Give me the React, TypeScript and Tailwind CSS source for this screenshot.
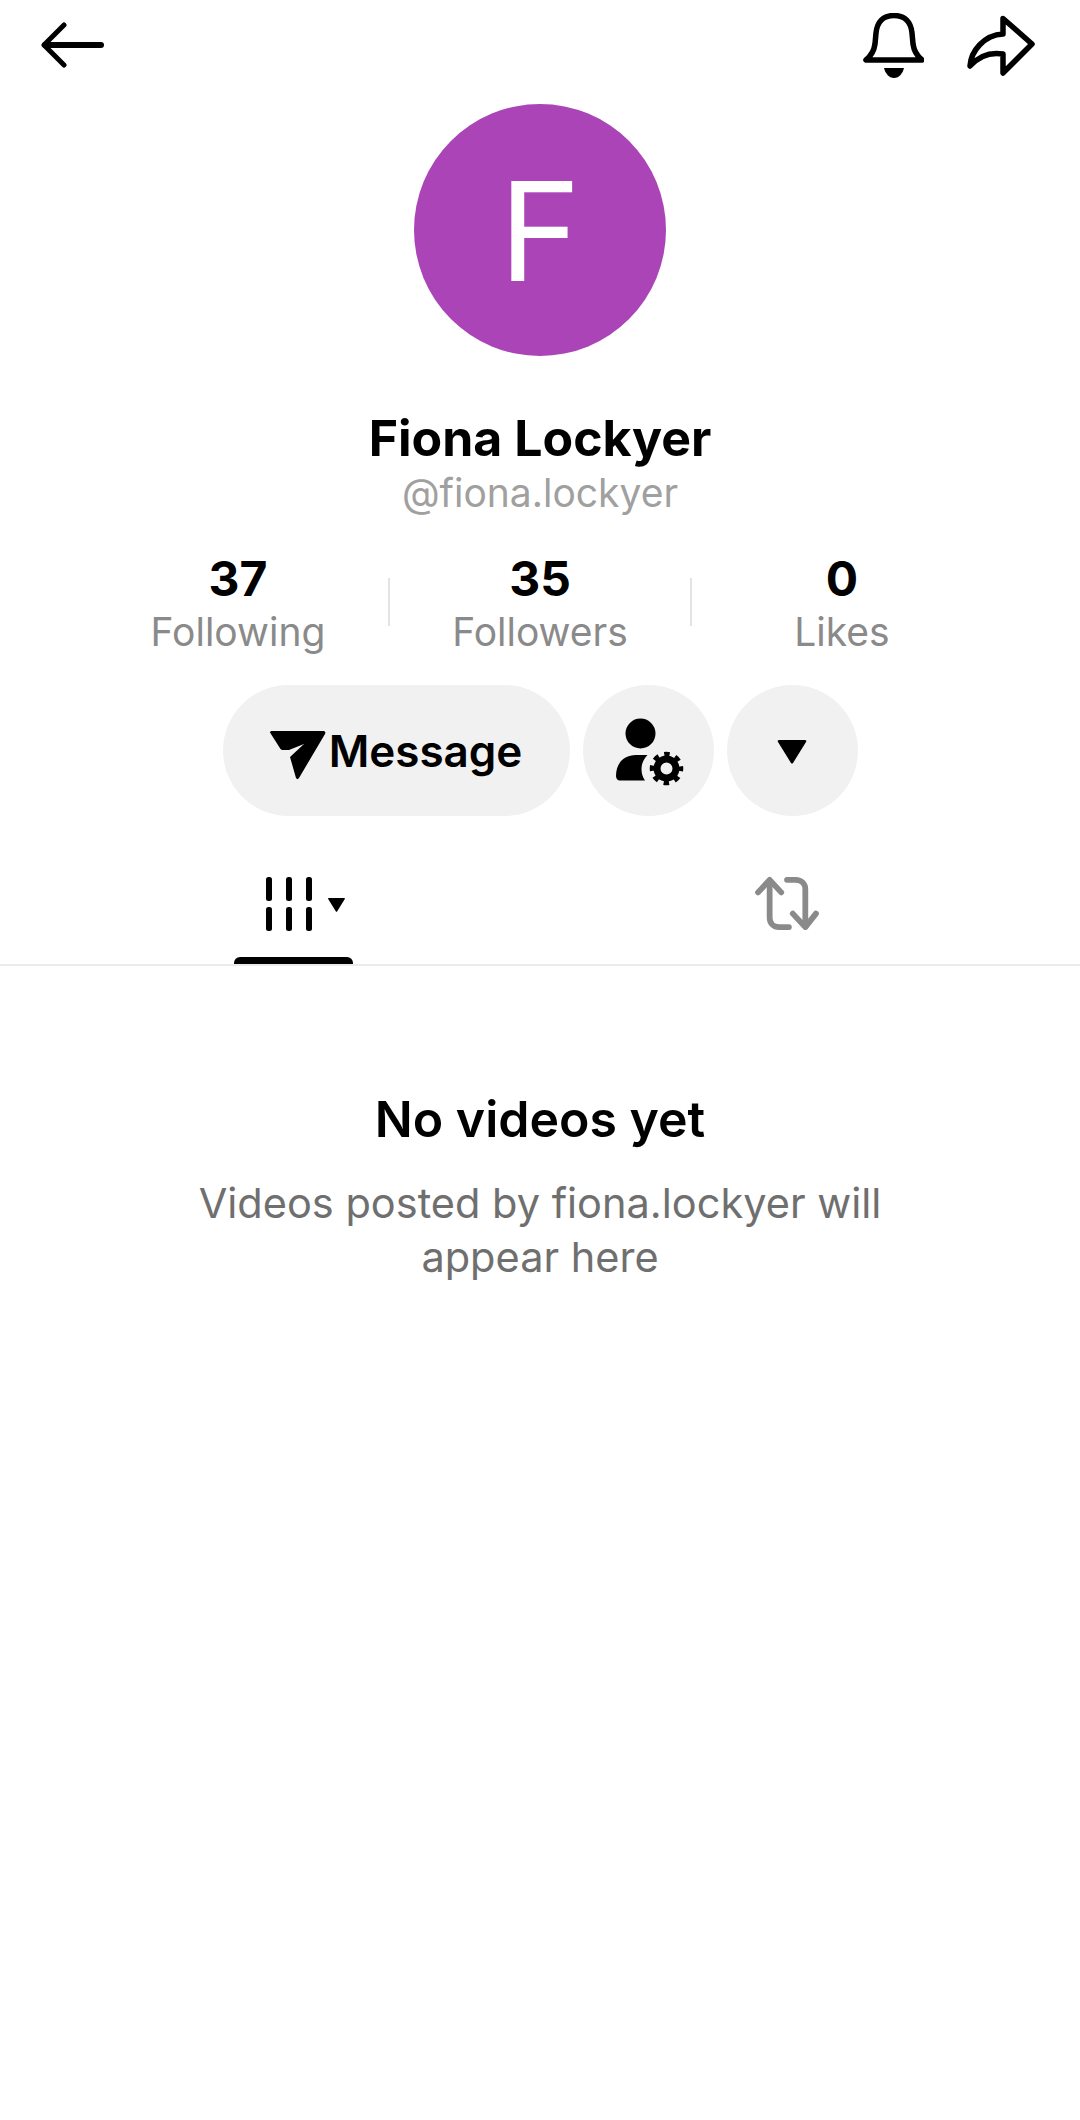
import { ReactNode } from 'react';

function BackIcon() {
  return (
    <svg width="64" height="46" viewBox="0 0 64 46" fill="none" stroke="black" strokeWidth="6" strokeLinecap="round" strokeLinejoin="round">
      <path d="M60 23H4" />
      <path d="M23 3L3 23l20 20" strokeWidth="5" />
    </svg>
  );
}

function BellIcon() {
  return (
    <svg width="62" height="66" viewBox="0 0 62 66" fill="none">
      <path d="M32 2.500C21 2.500 15 9 14 20l-1 11C12 38 9 43 4 47H60C55 43 52 38 51 31l-1-11C49 9 43 2.500 32 2.500Z" stroke="black" strokeWidth="5.500" strokeLinejoin="round" />
      <path d="M22 55h20c-1 5-5 10-10 10s-9-5-10-10Z" fill="black" />
    </svg>
  );
}

function ShareIcon() {
  return (
    <svg width="68" height="62" viewBox="0 0 68 62" fill="none">
      <path d="M36 3.500 65 29 36 58V39C24 37 12 41 3 51 4 36 17 20 36 19V3.500Z" stroke="black" strokeWidth="5.500" strokeLinejoin="round" />
    </svg>
  );
}

function SendIcon() {
  return (
    <svg width="56" height="49" viewBox="0 0 56 49" fill="black" className="mt-[9px]">
      <path d="M0 1.500C0 .5 1 0 2 0h51c2 0 3 1 2 3L29 47c-1 1.500-2 1.500-3 0L20 26l14-13-15 6H13c-1 0-2-.5-2.500-1L0 1.500Z" />
    </svg>
  );
}

function UserGearIcon() {
  return (
    <svg width="68" height="66" viewBox="0 0 68 66" fill="black" className="overflow-visible">
      <circle cx="26.500" cy="15.500" r="15" />
      <path d="M2 58C2 46 9 37 22 37h11.500c-3 3-6 8-6 14 0 4 1 8 3.500 11.500H6c-2.500 0-4-2-4-4.500Z" />
      <circle cx="52.500" cy="50.500" r="9.500" fill="none" stroke="black" strokeWidth="7" />
      <circle cx="52.500" cy="50.500" r="14.500" fill="none" stroke="black" strokeWidth="4.500" strokeDasharray="5.500 5.890" strokeDashoffset="2.750" />
    </svg>
  );
}

function GridIcon() {
  return (
    <svg width="46" height="54" viewBox="0 0 46 54" fill="black">
      <rect x="0" y="0" width="6" height="24" rx="2.500" />
      <rect x="20" y="0" width="6" height="24" rx="2.500" />
      <rect x="40" y="0" width="6" height="24" rx="2.500" />
      <rect x="0" y="30" width="6" height="24" rx="2.500" />
      <rect x="20" y="30" width="6" height="24" rx="2.500" />
      <rect x="40" y="30" width="6" height="24" rx="2.500" />
    </svg>
  );
}

function RepostIcon() {
  return (
    <svg width="64" height="54" viewBox="0 0 66 56" fill="none" stroke="#8a8a8a" strokeWidth="6" strokeLinecap="round" strokeLinejoin="round">
      <path d="M3 17 15 4l12 13" />
      <path d="M15 5v38c0 6 4 10 10 10h10" />
      <path d="M33 4h9c6 0 10 4 10 10v38" />
      <path d="M39 39l13 14 11-14" />
    </svg>
  );
}

function Caret({ className }: { className: string }) {
  return (
    <svg className={className} viewBox="0 0 30 24" fill="black">
      <path d="M1 2C0 1 1 0 2 0h26c1 0 2 1 1 2L16 23c-.5.8-1.500.8-2 0L1 2Z" />
    </svg>
  );
}

function Stat({ value, label }: { value: string; label: string }) {
  return (
    <div className="flex w-[300px] flex-col items-center">
      <span className="h-[60px] text-[48px] leading-[60px] font-bold text-black">{value}</span>
      <span className="h-[46px] text-[39px] leading-[46px] text-[#8a8a8a]">{label}</span>
    </div>
  );
}

function RoundButton({ children }: { children: ReactNode }) {
  return <button className="flex h-[131px] w-[131px] items-center justify-center rounded-full bg-[#f1f1f1]">{children}</button>;
}

export default function App() {
  return (
    <div className="flex h-[2120px] w-[1080px] flex-col items-center bg-white font-['Inter',sans-serif]">
      {/* Top bar */}
      <div className="flex h-[104px] w-full items-start justify-between pr-[45px] pl-[41px]">
        <div className="pt-[22px]">
          <BackIcon />
        </div>
        <div className="flex items-start gap-[43px] pt-[13px]">
          <BellIcon />
          <div className="pt-[2px]">
            <ShareIcon />
          </div>
        </div>
      </div>

      {/* Avatar */}
      <div className="flex h-[252px] w-[252px] items-center justify-center rounded-full bg-[#aa44b7] text-[138px] font-normal text-white">F</div>

      <h1 className="mt-[51px] h-[62px] text-[50px] leading-[62px] font-bold text-black">Fiona Lockyer</h1>
      <p className="h-[48px] text-[39px] leading-[48px] text-[#a0a0a0]">@fiona.lockyer</p>

      {/* Stats */}
      <div className="mt-[32px] flex items-center">
        <Stat value="37" label="Following" />
        <div className="h-[48px] w-[2px] bg-[#e3e3e3]" />
        <Stat value="35" label="Followers" />
        <div className="h-[48px] w-[2px] bg-[#e3e3e3]" />
        <Stat value="0" label="Likes" />
      </div>

      {/* Actions */}
      <div className="mt-[30px] flex gap-[13px]">
        <button className="flex h-[131px] w-[347px] items-center justify-center gap-[3px] rounded-full bg-[#f1f1f1] text-[44px] font-semibold text-black">
          <SendIcon />
          Message
        </button>
        <RoundButton>
          <UserGearIcon />
        </RoundButton>
        <RoundButton>
          <Caret className="mt-[2px] h-[24px] w-[30px]" />
        </RoundButton>
      </div>

      {/* Tabs */}
      <div className="mt-[41px] flex h-[109px] w-full border-b-2 border-[#ebebeb]">
        <div className="flex w-[540px] justify-center">
          <div className="ml-[46px] flex h-[107px] w-[119px] flex-col items-center justify-between">
            <div className="flex items-start gap-[15px] pt-[20px] pl-[26px]">
              <GridIcon />
              <Caret className="mt-[21px] h-[14px] w-[19px]" />
            </div>
            <div className="h-[7px] w-full rounded-t-md bg-black" />
          </div>
        </div>
        <div className="flex w-[540px] justify-center pt-[19px]">
          <div className="ml-[-46px]">
            <RepostIcon />
          </div>
        </div>
      </div>

      {/* Empty state */}
      <h2 className="mt-[123px] h-[60px] text-[50px] leading-[60px] font-semibold text-black">No videos yet</h2>
      <p className="mt-[27px] w-[760px] text-center text-[41.500px] leading-[54px] text-[#6f6f6f]">Videos posted by fiona.lockyer will appear here</p>
    </div>
  );
}
